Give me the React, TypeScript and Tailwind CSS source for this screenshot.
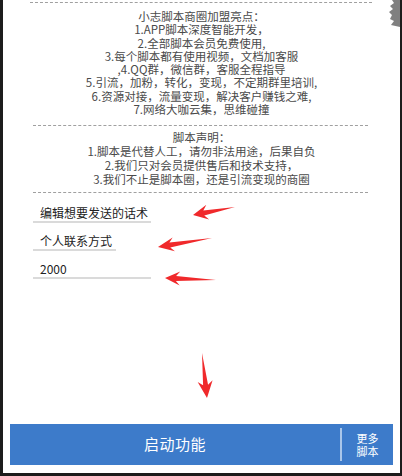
const intro = [
  "小志脚本商圈加盟亮点：",
  "1.APP脚本深度智能开发，",
  "2.全部脚本会员免费使用,",
  "3.每个脚本都有使用视频，文档加客服",
  ",4.QQ群，微信群，客服全程指导",
  "5.引流，加粉，转化，变现，不定期群里培训,",
  "6.资源对接，流量变现，解决客户赚钱之难,",
  "7.网络大咖云集，思维碰撞",
];

const notice = [
  "脚本声明：",
  "1.脚本是代替人工，请勿非法用途，后果自负",
  "2.我们只对会员提供售后和技术支持，",
  "3.我们不止是脚本圈，还是引流变现的商圈",
];

const fields = [
  { value: "编辑想要发送的话术", w: "w-[118px]" },
  { value: "个人联系方式", w: "w-[83px]" },
  { value: "2000", w: "w-[118px]" },
];

// arrow polygon from tail to tip, tapered shaft + barbed head
function arrowPoints(tx: number, ty: number, px: number, py: number, head = 15, half = 7.5, neck = 2.5) {
  const dx = tx - px;
  const dy = ty - py;
  const len = Math.hypot(dx, dy);
  const ux = dx / len;
  const uy = dy / len;
  const nx = -uy;
  const ny = ux;
  const hx = px + ux * head;
  const hy = py + uy * head;
  const back = px + ux * (head - 4);
  const backY = py + uy * (head - 4);
  const pts = [
    [px, py],
    [hx + nx * half, hy + ny * half],
    [back + nx * neck, backY + ny * neck],
    [tx, ty],
    [back - nx * neck, backY - ny * neck],
    [hx - nx * half, hy - ny * half],
  ];
  return pts.map((p) => p.join(",")).join(" ");
}

function Dashes({ className = "" }: { className?: string }) {
  return <div className={`h-0 border-t border-dashed border-[#a0a0a0] ${className}`} />;
}

export default function App() {
  return (
    <div className="relative w-[402px] h-[476px] overflow-hidden bg-[#1c1c1c] font-['Noto_Sans_CJK_SC','Noto_Sans',sans-serif]">
      <div className="relative ml-[3px] w-[397px] h-[473px] bg-white flex flex-col">
        <Dashes className="mt-[2px] ml-[27px] mr-[28px]" />

        <div className="mt-[7px] flex flex-col items-center text-[11.5px] leading-[13.3px] text-[#4a4a4a]">
          {intro.map((l) => (
            <div key={l}>{l}</div>
          ))}
        </div>

        <Dashes className="mt-[9px] ml-[30px] mr-[32px]" />

        <div className="mt-[5px] flex flex-col items-center text-[11.5px] leading-[13.8px] text-[#4a4a4a]">
          {notice.map((l) => (
            <div key={l}>{l}</div>
          ))}
        </div>

        <Dashes className="mt-[5px] ml-[30px] mr-[32px]" />

        <div className="mt-[13px] ml-[30px] flex flex-col gap-[11px]">
          {fields.map((f) => (
            <div key={f.value} className={`${f.w} border-b-2 border-[#dadada] pl-[7px] pb-[1px] text-[12px] leading-[14px] text-[#222]`}>
              {f.value}
            </div>
          ))}
        </div>

        <div className="flex-1" />

        <div className="mx-[7px] mb-[8px] h-[41px] flex bg-[#3d7bca] text-white">
          <div className="flex-1 flex items-center justify-center text-[15px] tracking-[0.5px]">启动功能</div>
          <div className="my-[4px] w-[2px] bg-[#a9c6ea]" />
          <div className="w-[51px] flex flex-col items-center justify-center text-[11px] leading-[13px]">
            <span>更多</span>
            <span>脚本</span>
          </div>
        </div>
      </div>

      {/* gray fragment at top-right */}
      <svg className="absolute right-[2px] top-0" width="12" height="27" viewBox="0 0 12 27">
        <path d="M12 0 L4 0 L6 3 L2 6 L5 9 L1 12 L4 15 L2 19 L6 21 L3 25 L12 27 Z" fill="#808080" />
      </svg>

      <div className="absolute right-0 top-0 w-[2px] h-full bg-[#1c1c1c]" />

      {/* annotation arrows */}
      <svg className="absolute inset-0 pointer-events-none" width="402" height="476">
        <polygon points={arrowPoints(235, 207, 193, 215, 15, 7.5, 2.5)} fill="#f0292b" />
        <polygon points={arrowPoints(212, 238, 158, 247, 16, 7, 2.5)} fill="#f0292b" />
        <polygon points={arrowPoints(216, 280, 165, 278, 15, 7, 2.5)} fill="#f0292b" />
        <polygon points={arrowPoints(202, 353, 207, 398, 17, 7.5, 2.5)} fill="#f0292b" />
      </svg>
    </div>
  );
}
